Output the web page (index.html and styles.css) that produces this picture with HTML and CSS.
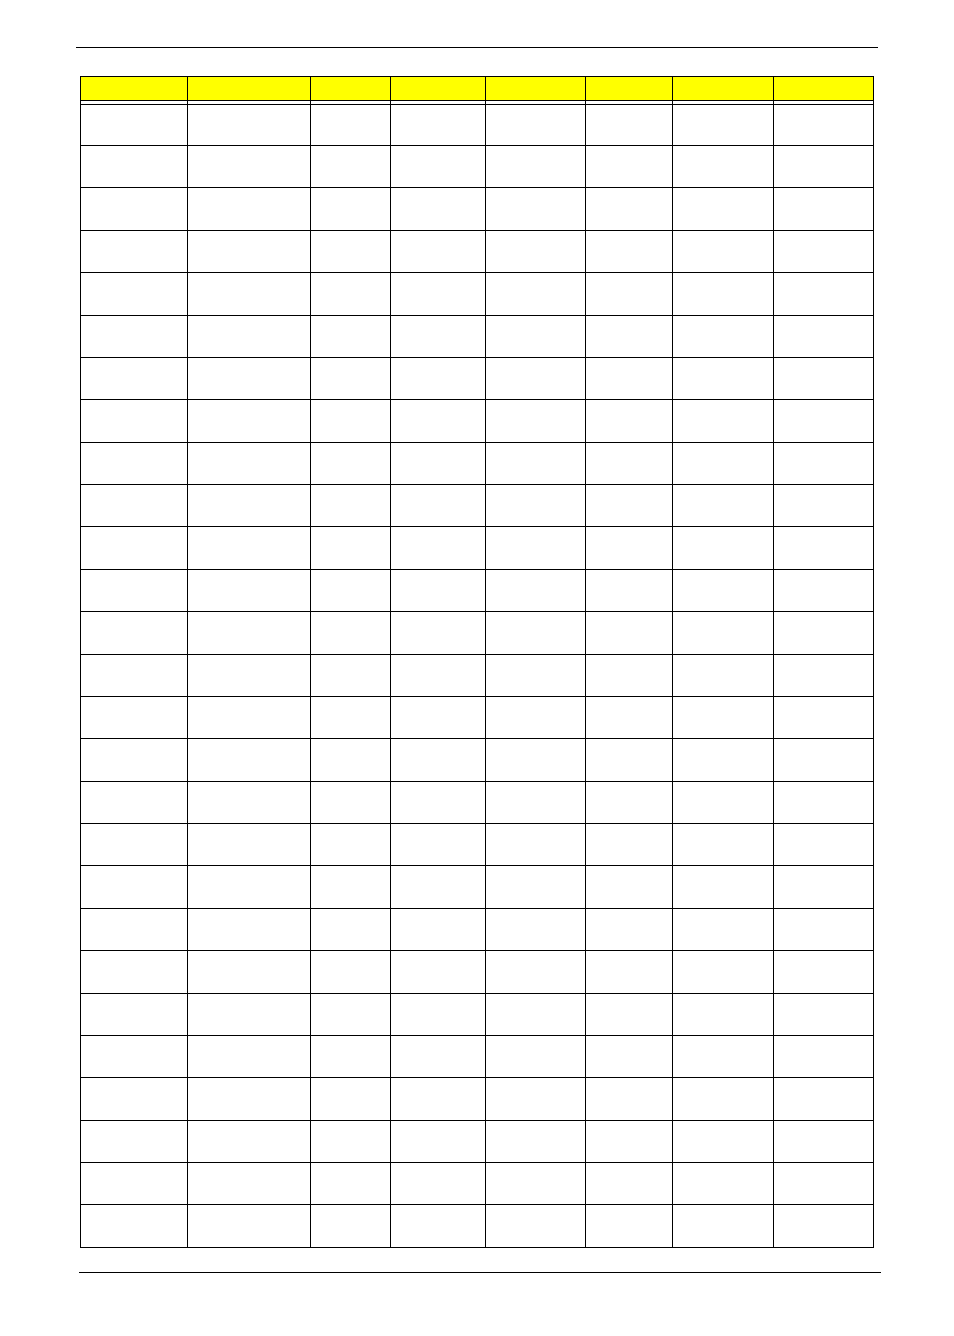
FILE: index.html
```html
<!DOCTYPE html>
<html lang="en">
<head>
<meta charset="utf-8">
<title>Parts list</title>
<link rel="stylesheet" href="styles.css">
</head>
<body>
<div class="page">
  <div class="rule rule-top"></div>
  <div class="grid">
    <div class="c h"></div><div class="c h"></div><div class="c h"></div><div class="c h"></div><div class="c h"></div><div class="c h"></div><div class="c h"></div><div class="c h"></div>
    <div class="c s"></div><div class="c s"></div><div class="c s"></div><div class="c s"></div><div class="c s"></div><div class="c s"></div><div class="c s"></div><div class="c s"></div>
    <div class="c f"></div><div class="c f"></div><div class="c f"></div><div class="c f"></div><div class="c f"></div><div class="c f"></div><div class="c f"></div><div class="c f"></div>
    <div class="c"></div><div class="c"></div><div class="c"></div><div class="c"></div><div class="c"></div><div class="c"></div><div class="c"></div><div class="c"></div>
    <div class="c"></div><div class="c"></div><div class="c"></div><div class="c"></div><div class="c"></div><div class="c"></div><div class="c"></div><div class="c"></div>
    <div class="c"></div><div class="c"></div><div class="c"></div><div class="c"></div><div class="c"></div><div class="c"></div><div class="c"></div><div class="c"></div>
    <div class="c"></div><div class="c"></div><div class="c"></div><div class="c"></div><div class="c"></div><div class="c"></div><div class="c"></div><div class="c"></div>
    <div class="c"></div><div class="c"></div><div class="c"></div><div class="c"></div><div class="c"></div><div class="c"></div><div class="c"></div><div class="c"></div>
    <div class="c"></div><div class="c"></div><div class="c"></div><div class="c"></div><div class="c"></div><div class="c"></div><div class="c"></div><div class="c"></div>
    <div class="c"></div><div class="c"></div><div class="c"></div><div class="c"></div><div class="c"></div><div class="c"></div><div class="c"></div><div class="c"></div>
    <div class="c"></div><div class="c"></div><div class="c"></div><div class="c"></div><div class="c"></div><div class="c"></div><div class="c"></div><div class="c"></div>
    <div class="c"></div><div class="c"></div><div class="c"></div><div class="c"></div><div class="c"></div><div class="c"></div><div class="c"></div><div class="c"></div>
    <div class="c"></div><div class="c"></div><div class="c"></div><div class="c"></div><div class="c"></div><div class="c"></div><div class="c"></div><div class="c"></div>
    <div class="c"></div><div class="c"></div><div class="c"></div><div class="c"></div><div class="c"></div><div class="c"></div><div class="c"></div><div class="c"></div>
    <div class="c"></div><div class="c"></div><div class="c"></div><div class="c"></div><div class="c"></div><div class="c"></div><div class="c"></div><div class="c"></div>
    <div class="c"></div><div class="c"></div><div class="c"></div><div class="c"></div><div class="c"></div><div class="c"></div><div class="c"></div><div class="c"></div>
    <div class="c"></div><div class="c"></div><div class="c"></div><div class="c"></div><div class="c"></div><div class="c"></div><div class="c"></div><div class="c"></div>
    <div class="c"></div><div class="c"></div><div class="c"></div><div class="c"></div><div class="c"></div><div class="c"></div><div class="c"></div><div class="c"></div>
    <div class="c"></div><div class="c"></div><div class="c"></div><div class="c"></div><div class="c"></div><div class="c"></div><div class="c"></div><div class="c"></div>
    <div class="c"></div><div class="c"></div><div class="c"></div><div class="c"></div><div class="c"></div><div class="c"></div><div class="c"></div><div class="c"></div>
    <div class="c"></div><div class="c"></div><div class="c"></div><div class="c"></div><div class="c"></div><div class="c"></div><div class="c"></div><div class="c"></div>
    <div class="c"></div><div class="c"></div><div class="c"></div><div class="c"></div><div class="c"></div><div class="c"></div><div class="c"></div><div class="c"></div>
    <div class="c"></div><div class="c"></div><div class="c"></div><div class="c"></div><div class="c"></div><div class="c"></div><div class="c"></div><div class="c"></div>
    <div class="c"></div><div class="c"></div><div class="c"></div><div class="c"></div><div class="c"></div><div class="c"></div><div class="c"></div><div class="c"></div>
    <div class="c"></div><div class="c"></div><div class="c"></div><div class="c"></div><div class="c"></div><div class="c"></div><div class="c"></div><div class="c"></div>
    <div class="c"></div><div class="c"></div><div class="c"></div><div class="c"></div><div class="c"></div><div class="c"></div><div class="c"></div><div class="c"></div>
    <div class="c"></div><div class="c"></div><div class="c"></div><div class="c"></div><div class="c"></div><div class="c"></div><div class="c"></div><div class="c"></div>
    <div class="c"></div><div class="c"></div><div class="c"></div><div class="c"></div><div class="c"></div><div class="c"></div><div class="c"></div><div class="c"></div>
    <div class="c"></div><div class="c"></div><div class="c"></div><div class="c"></div><div class="c"></div><div class="c"></div><div class="c"></div><div class="c"></div>
  </div>
  <div class="rule rule-bottom"></div>
</div>
</body>
</html>
```

FILE: styles.css
```css
html, body {
  margin: 0;
  padding: 0;
  background: #ffffff;
  font-family: "Liberation Sans", Arial, sans-serif;
}

.page {
  display: flex;
  flex-direction: column;
  align-items: flex-start;
  padding-top: 47px;
}

.rule {
  height: 1px;
  width: 802px;
  background: #000000;
}

.rule-top {
  margin-left: 76px;
}

.rule-bottom {
  margin-left: 79px;
  margin-top: 24px;
}

.grid {
  margin-top: 28px;
  margin-left: 80px;
  display: grid;
  grid-template-columns: 106px 122px 79px 94px 99px 86px 100px 99px;
  grid-template-rows: 23px 3px 40px;
  grid-auto-rows: 41.38px;
  gap: 1px;
  padding: 1px;
  background: #000000;
}

.c {
  background: #ffffff;
}

.c.h {
  background: #ffff00;
}
```
